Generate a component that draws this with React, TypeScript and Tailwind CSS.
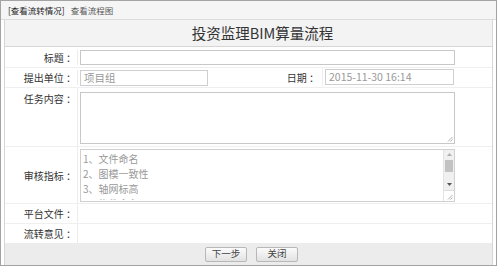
import React from 'react'

const FONT = { fontFamily: '"Noto Sans CJK SC", "Noto Sans", sans-serif' }

const Label: React.FC<{ text: string; className?: string }> = ({ text, className = '' }) => (
  <div className={`w-[73px] shrink-0 border-r border-[#ececec] pr-[1px] text-right text-[10px] text-[#333] ${className}`}>
    {text}
  </div>
)

const Grip = () => (
  <svg width="6" height="6" viewBox="0 0 6 6" className="absolute bottom-[1px] right-[1px]">
    <path d="M5.5 1 L1 5.5 M5.5 3.5 L3.5 5.5" stroke="#999" strokeWidth="0.8" />
  </svg>
)

export default function App() {
  return (
    <div className="h-[270px] w-[497px] bg-white" style={FONT}>
      <div className="flex h-[266px] flex-col border border-[#a3a3a3]">
        {/* tabs */}
        <div className="flex h-[19px] shrink-0 items-center gap-[6px] border-b border-[#dcdcdc] bg-[#f5f5f5] pl-[7px] text-[8.5px] leading-none">
          <span className="text-[#222]">[查看流转情况]</span>
          <span className="text-[#555]">查看流程图</span>
        </div>

        <div className="flex flex-1 flex-col px-[3px]">
          <div className="flex flex-1 flex-col border-x border-[#d6d6d6]">
            {/* title */}
            <div className="flex h-[27px] shrink-0 items-center justify-center border-b border-[#d6d6d6] bg-[#f3f3f3] pl-[28px] text-[14.5px] text-[#333]">
              投资监理BIM算量流程
            </div>

            {/* 标题 */}
            <div className="flex h-[21px] shrink-0 items-center border-b border-[#efefef]">
              <Label text="标题 ：" />
              <div className="ml-[2px] h-[15px] w-[375px] border border-[#c8c8c8]" />
            </div>

            {/* 提出单位 / 日期 */}
            <div className="flex h-[20px] shrink-0 items-center border-b border-[#efefef]">
              <Label text="提出单位 ：" />
              <div className="ml-[2px] flex h-[16px] w-[128px] items-center border border-[#cfcfcf] pl-[3px] text-[10.5px] text-[#999]">
                项目组
              </div>
              <div className="w-[114px] pr-[3px] text-right text-[10px] text-[#333]">日期 ：</div>
              <div className="flex h-[18px] items-center self-stretch border-l border-[#efefef] pl-[2px]">
                <div className="flex h-[16px] w-[129px] items-center border border-[#cfcfcf] pl-[3px] text-[10.5px] text-[#999]">
                  2015-11-30 16:14
                </div>
              </div>
            </div>

            {/* 任务内容 */}
            <div className="flex h-[59px] shrink-0 border-b border-[#efefef]">
              <Label text="任务内容 ：" className="pt-[3px]" />
              <div className="relative ml-[2px] mt-[4px] h-[52px] w-[375px] border border-[#c8c8c8]">
                <Grip />
              </div>
            </div>

            {/* 审核指标 */}
            <div className="flex h-[57px] shrink-0 items-center border-b border-[#efefef]">
              <Label text="审核指标 ：" className="flex h-full items-center justify-end" />
              <div className="relative ml-[2px] flex h-[53px] w-[375px] border border-[#d0d0d0]">
                <div className="h-full flex-1 overflow-hidden pl-[2px] pt-[1px] text-[10px] leading-[15px] text-[#999]">
                  <div>1、文件命名</div>
                  <div>2、图模一致性</div>
                  <div>3、轴网标高</div>
                  <div className="h-[4px] overflow-hidden">4、构件命名</div>
                </div>
                <div className="flex w-[11px] flex-col border-l border-[#e3e3e3] bg-[#f0f0f0]">
                  <div className="flex h-[10px] items-center justify-center">
                    <svg width="5" height="3" viewBox="0 0 5 3"><path d="M0 3 L2.5 0 L5 3 Z" fill="#b0b0b0" /></svg>
                  </div>
                  <div className="mx-[1px] h-[12px] bg-[#c2c2c2]" />
                  <div className="flex-1" />
                  <div className="flex h-[10px] items-center justify-center">
                    <svg width="5" height="3" viewBox="0 0 5 3"><path d="M0 0 L5 0 L2.5 3 Z" fill="#555" /></svg>
                  </div>
                  <div className="relative h-[11px] border-t border-[#ddd] bg-white">
                    <Grip />
                  </div>
                </div>
              </div>
            </div>

            {/* 平台文件 */}
            <div className="flex h-[20px] shrink-0 items-center border-b border-[#efefef]">
              <Label text="平台文件 ：" className="flex h-full items-center justify-end" />
            </div>

            {/* 流转意见 */}
            <div className="flex h-[19px] shrink-0 items-center">
              <Label text="流转意见 ：" className="flex h-full items-center justify-end" />
            </div>

            {/* footer */}
            <div className="flex flex-1 items-center justify-center gap-[9px] bg-[#ececec] pl-[6px]">
              <button className="h-[15px] w-[42px] rounded-[2px] border border-[#b8b8b8] bg-gradient-to-b from-[#fbfbfb] to-[#e2e2e2] text-[9.5px] leading-none text-[#444]">
                下一步
              </button>
              <button className="h-[15px] w-[42px] rounded-[2px] border border-[#b8b8b8] bg-gradient-to-b from-[#fbfbfb] to-[#e2e2e2] text-[9.5px] leading-none text-[#444]">
                关闭
              </button>
            </div>
          </div>
        </div>
      </div>
    </div>
  )
}
